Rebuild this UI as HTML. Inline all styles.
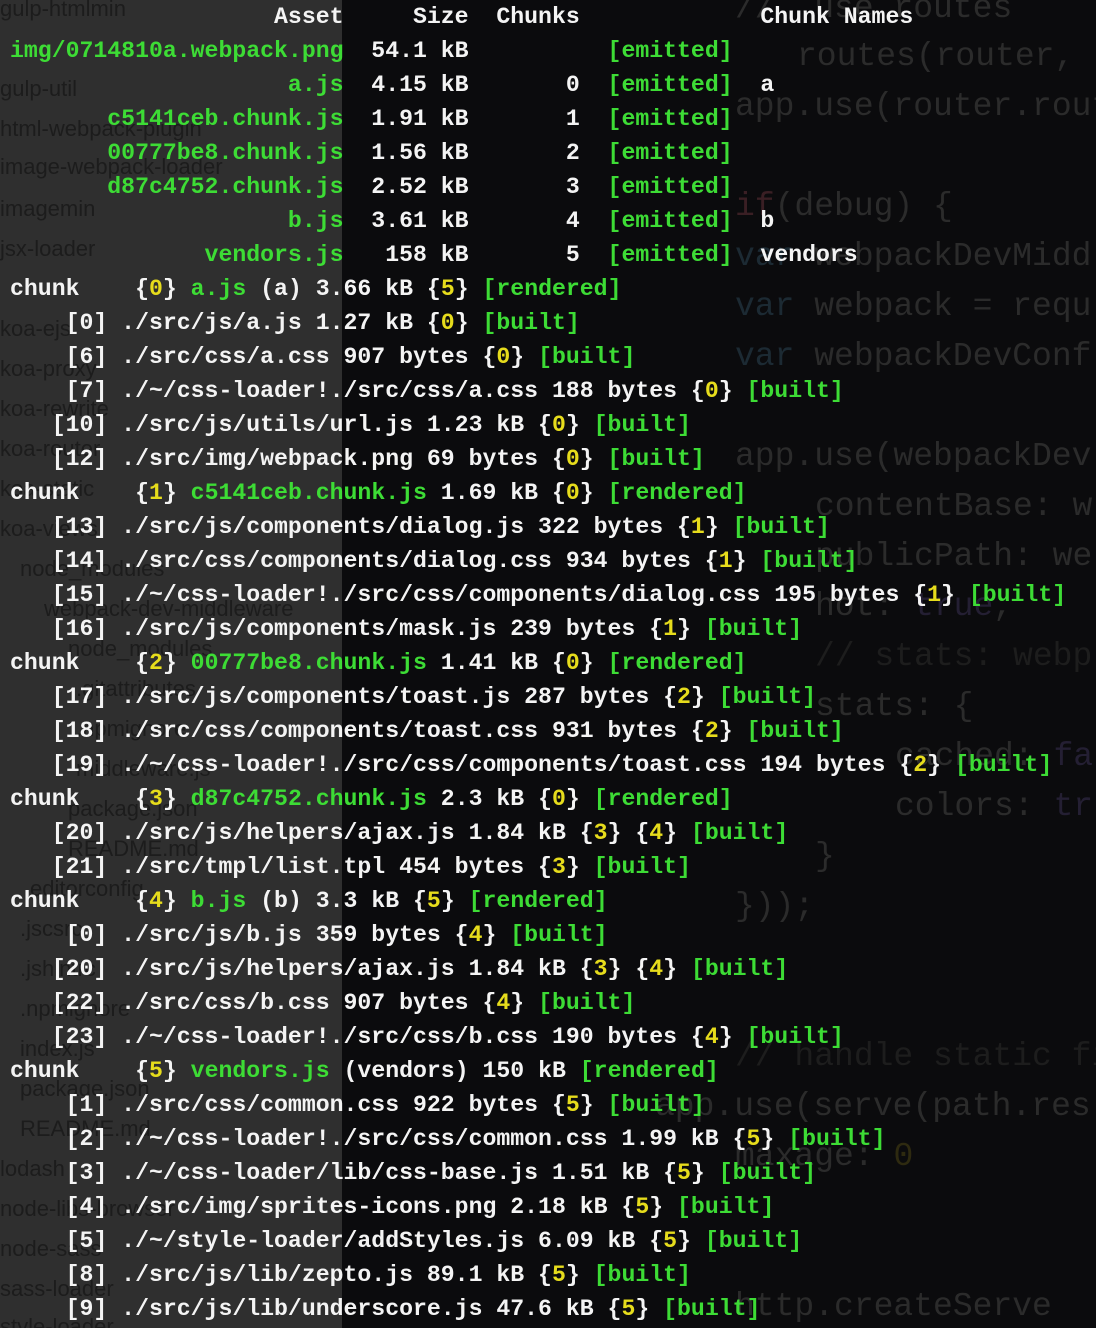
<!DOCTYPE html>
<html><head><meta charset="utf-8"><style>
html,body{margin:0;padding:0;}
body{width:1096px;height:1328px;overflow:hidden;background:#0b0b0d;position:relative;font-family:"Liberation Mono",monospace;}
#side{position:absolute;left:0;top:0;width:342px;height:1328px;background:#2f2f2f;}
.sb{position:absolute;font-family:"Liberation Sans",sans-serif;font-size:22px;color:#1c1c1c;white-space:pre;}
.cd{position:absolute;font-family:"Liberation Mono",monospace;font-size:33px;color:#2b2b2b;white-space:pre;}
#term{position:absolute;left:10px;top:0px;margin:0;font-family:"Liberation Mono",monospace;font-size:23.17px;line-height:34px;color:#f4f4f4;white-space:pre;font-weight:bold;}
.g{color:#3ddc35;}
.y{color:#e6dc1c;}
#clip{position:absolute;left:0;top:0;width:1096px;height:1328px;overflow:hidden;}
</style></head><body>
<div id="clip">
<div id="side"></div>
<div class="sb" style="left:0;top:-4px">gulp-htmlmin</div>
<div class="sb" style="left:0;top:76px">gulp-util</div>
<div class="sb" style="left:0;top:116px">html-webpack-plugin</div>
<div class="sb" style="left:0;top:154px">image-webpack-loader</div>
<div class="sb" style="left:0;top:196px">imagemin</div>
<div class="sb" style="left:0;top:236px">jsx-loader</div>
<div class="sb" style="left:0;top:316px">koa-ejs</div>
<div class="sb" style="left:0;top:356px">koa-proxy</div>
<div class="sb" style="left:0;top:396px">koa-rewrite</div>
<div class="sb" style="left:0;top:436px">koa-router</div>
<div class="sb" style="left:0;top:476px">koa-static</div>
<div class="sb" style="left:0;top:516px">koa-views</div>
<div class="sb" style="left:20px;top:556px">node_modules</div>
<div class="sb" style="left:44px;top:596px">webpack-dev-middleware</div>
<div class="sb" style="left:68px;top:636px">node_modules</div>
<div class="sb" style="left:76px;top:676px">.gitattributes</div>
<div class="sb" style="left:76px;top:716px">.npmignore</div>
<div class="sb" style="left:76px;top:756px">middleware.js</div>
<div class="sb" style="left:68px;top:796px">package.json</div>
<div class="sb" style="left:68px;top:836px">README.md</div>
<div class="sb" style="left:30px;top:876px">editorconfig</div>
<div class="sb" style="left:20px;top:916px">.jscsrc</div>
<div class="sb" style="left:20px;top:956px">.jshintrc</div>
<div class="sb" style="left:20px;top:996px">.npmignore</div>
<div class="sb" style="left:20px;top:1036px">index.js</div>
<div class="sb" style="left:20px;top:1076px">package.json</div>
<div class="sb" style="left:20px;top:1116px">README.md</div>
<div class="sb" style="left:0;top:1156px">lodash</div>
<div class="sb" style="left:0;top:1196px">node-libs-browser</div>
<div class="sb" style="left:0;top:1236px">node-sass</div>
<div class="sb" style="left:0;top:1276px">sass-loader</div>
<div class="sb" style="left:0;top:1314px">style-loader</div>

<div class="cd" style="left:735px;top:-10px">//  use routes</div>
<div class="cd" style="left:797px;top:38px">routes(router, app);</div>
<div class="cd" style="left:735px;top:88px">app.use(router.routes(</div>
<div class="cd" style="left:735px;top:188px"><span style="color:#3a1f24">if</span>(debug) {</div>
<div class="cd" style="left:735px;top:238px"><span style="color:#1c2a33">var</span> webpackDevMidd</div>
<div class="cd" style="left:735px;top:288px"><span style="color:#1c2a33">var</span> webpack = requ</div>
<div class="cd" style="left:735px;top:338px"><span style="color:#1c2a33">var</span> webpackDevConf</div>
<div class="cd" style="left:735px;top:438px">app.use(webpackDev</div>
<div class="cd" style="left:815px;top:488px">contentBase: w</div>
<div class="cd" style="left:815px;top:538px">publicPath: we</div>
<div class="cd" style="left:815px;top:588px">hot: <span style="color:#241f33">true</span>,</div>
<div class="cd" style="left:815px;top:638px;color:#1d1d1d">// stats: webp</div>
<div class="cd" style="left:815px;top:688px">stats: {</div>
<div class="cd" style="left:895px;top:738px">cached: <span style="color:#241f33">fa</span></div>
<div class="cd" style="left:895px;top:788px">colors: <span style="color:#241f33">tr</span></div>
<div class="cd" style="left:815px;top:838px">}</div>
<div class="cd" style="left:735px;top:888px">}));</div>
<div class="cd" style="left:735px;top:1038px;color:#1d1d1d">// handle static files</div>
<div class="cd" style="left:655px;top:1088px">app.use(serve(path.res</div>
<div class="cd" style="left:735px;top:1138px">maxage: <span style="color:#2e2a10">0</span></div>
<div class="cd" style="left:735px;top:1288px">http.createServe</div>

<pre id="term">                   Asset     Size  Chunks             Chunk Names
<span class="g">img/0714810a.webpack.png</span>  54.1 kB          <span class="g">[emitted]</span>
                    <span class="g">a.js</span>  4.15 kB       0  <span class="g">[emitted]</span>  a
       <span class="g">c5141ceb.chunk.js</span>  1.91 kB       1  <span class="g">[emitted]</span>
       <span class="g">00777be8.chunk.js</span>  1.56 kB       2  <span class="g">[emitted]</span>
       <span class="g">d87c4752.chunk.js</span>  2.52 kB       3  <span class="g">[emitted]</span>
                    <span class="g">b.js</span>  3.61 kB       4  <span class="g">[emitted]</span>  b
              <span class="g">vendors.js</span>   158 kB       5  <span class="g">[emitted]</span>  vendors
chunk    {<span class="y">0</span>} <span class="g">a.js</span> (a) 3.66 kB {<span class="y">5</span>} <span class="g">[rendered]</span>
    [0] ./src/js/a.js 1.27 kB {<span class="y">0</span>} <span class="g">[built]</span>
    [6] ./src/css/a.css 907 bytes {<span class="y">0</span>} <span class="g">[built]</span>
    [7] ./~/css-loader!./src/css/a.css 188 bytes {<span class="y">0</span>} <span class="g">[built]</span>
   [10] ./src/js/utils/url.js 1.23 kB {<span class="y">0</span>} <span class="g">[built]</span>
   [12] ./src/img/webpack.png 69 bytes {<span class="y">0</span>} <span class="g">[built]</span>
chunk    {<span class="y">1</span>} <span class="g">c5141ceb.chunk.js</span> 1.69 kB {<span class="y">0</span>} <span class="g">[rendered]</span>
   [13] ./src/js/components/dialog.js 322 bytes {<span class="y">1</span>} <span class="g">[built]</span>
   [14] ./src/css/components/dialog.css 934 bytes {<span class="y">1</span>} <span class="g">[built]</span>
   [15] ./~/css-loader!./src/css/components/dialog.css 195 bytes {<span class="y">1</span>} <span class="g">[built]</span>
   [16] ./src/js/components/mask.js 239 bytes {<span class="y">1</span>} <span class="g">[built]</span>
chunk    {<span class="y">2</span>} <span class="g">00777be8.chunk.js</span> 1.41 kB {<span class="y">0</span>} <span class="g">[rendered]</span>
   [17] ./src/js/components/toast.js 287 bytes {<span class="y">2</span>} <span class="g">[built]</span>
   [18] ./src/css/components/toast.css 931 bytes {<span class="y">2</span>} <span class="g">[built]</span>
   [19] ./~/css-loader!./src/css/components/toast.css 194 bytes {<span class="y">2</span>} <span class="g">[built]</span>
chunk    {<span class="y">3</span>} <span class="g">d87c4752.chunk.js</span> 2.3 kB {<span class="y">0</span>} <span class="g">[rendered]</span>
   [20] ./src/js/helpers/ajax.js 1.84 kB {<span class="y">3</span>} {<span class="y">4</span>} <span class="g">[built]</span>
   [21] ./src/tmpl/list.tpl 454 bytes {<span class="y">3</span>} <span class="g">[built]</span>
chunk    {<span class="y">4</span>} <span class="g">b.js</span> (b) 3.3 kB {<span class="y">5</span>} <span class="g">[rendered]</span>
    [0] ./src/js/b.js 359 bytes {<span class="y">4</span>} <span class="g">[built]</span>
   [20] ./src/js/helpers/ajax.js 1.84 kB {<span class="y">3</span>} {<span class="y">4</span>} <span class="g">[built]</span>
   [22] ./src/css/b.css 907 bytes {<span class="y">4</span>} <span class="g">[built]</span>
   [23] ./~/css-loader!./src/css/b.css 190 bytes {<span class="y">4</span>} <span class="g">[built]</span>
chunk    {<span class="y">5</span>} <span class="g">vendors.js</span> (vendors) 150 kB <span class="g">[rendered]</span>
    [1] ./src/css/common.css 922 bytes {<span class="y">5</span>} <span class="g">[built]</span>
    [2] ./~/css-loader!./src/css/common.css 1.99 kB {<span class="y">5</span>} <span class="g">[built]</span>
    [3] ./~/css-loader/lib/css-base.js 1.51 kB {<span class="y">5</span>} <span class="g">[built]</span>
    [4] ./src/img/sprites-icons.png 2.18 kB {<span class="y">5</span>} <span class="g">[built]</span>
    [5] ./~/style-loader/addStyles.js 6.09 kB {<span class="y">5</span>} <span class="g">[built]</span>
    [8] ./src/js/lib/zepto.js 89.1 kB {<span class="y">5</span>} <span class="g">[built]</span>
    [9] ./src/js/lib/underscore.js 47.6 kB {<span class="y">5</span>} <span class="g">[built]</span></pre>
</div>
</body></html>
